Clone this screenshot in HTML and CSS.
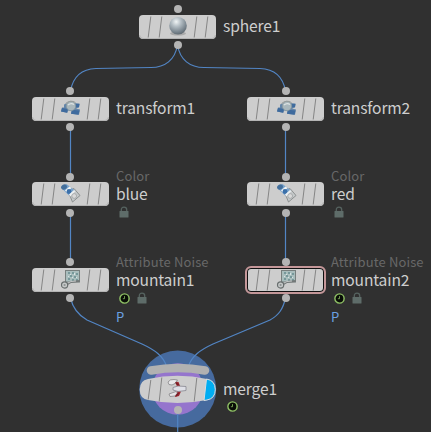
FILE: index.html
```html
<!DOCTYPE html>
<html lang="en">
<head>
<meta charset="utf-8">
<title>Node network</title>
<link rel="stylesheet" href="styles.css">
</head>
<body>
<svg class="defs" width="0" height="0" aria-hidden="true">
  <defs>
    <radialGradient id="ball" cx=".4" cy=".27" r=".75">
      <stop offset="0" stop-color="#f0f4f5"/><stop offset=".35" stop-color="#b5bfc5"/>
      <stop offset=".75" stop-color="#7d8992"/><stop offset="1" stop-color="#5d6870"/>
    </radialGradient>
    <symbol id="plate" viewBox="0 0 77 24">
      <rect width="77" height="24" rx="4" fill="#cdcdcd"/>
      <path d="M.5 20Q1 23.5 4 23.5H73Q76 23.5 76.5 20" fill="none" stroke="#b4b4b4"/>
      <path d="M11.8 1.5L9.2 22.5M22.8 1.5L20.2 22.5M57.8 1.5L55.2 22.5M68.8 1.5L66.2 22.5" stroke="#858585" stroke-width="1" fill="none"/>
    </symbol>
    <symbol id="sphere" viewBox="0 0 22 22">
      <ellipse cx="11" cy="18.5" rx="8" ry="2" fill="#aaa"/>
      <circle cx="11" cy="10.8" r="8.8" fill="url(#ball)"/>
    </symbol>
    <symbol id="transform" viewBox="0 0 22 22">
      <path d="M4 7.500L8 6L14 6L19.500 6.500L19 10.500L16 11.500L20 12.500L19 17.800L11 16.800L11.500 14L8 13.500L7.500 15.800L1 14.500L2 10.500L4 10.500Z" fill="#6485a8"/>
      <path d="M2 11L8 12L7 15.800L1 14.500ZM12 12.800L19.500 13.500L18.500 17.800L11 16.800ZM15 7L19.500 7L19 10L15 10.500Z" fill="#3f6b9e"/>
      <circle cx="11" cy="9" r="4.700" fill="#a9b7bc" stroke="#88969b" stroke-width=".7"/>
      <path d="M8 8Q11 5.500 14 7.500" fill="none" stroke="#dde3e3" stroke-width="1.400"/>
      <path d="M5.500 6.500Q10.500 2.500 15.500 5.500" fill="none" stroke="#979c9b" stroke-width="1"/>
    </symbol>
    <symbol id="paint" viewBox="0 0 22 22">
      <path d="M8 9L14 6.500L20 13.500L12.500 20Z" fill="#c5c9ca" stroke="#858989" stroke-width=".9"/>
      <path d="M1 5.500L6.500 2L15 8.500L9 13.500Z" fill="#78a2cb"/>
      <ellipse cx="4" cy="5" rx="3" ry="2.500" transform="rotate(-35 4 5)" fill="#436f9c"/>
      <path d="M5 8.500L9.500 4.500L11.500 6L7 10.500Z" fill="#f2f4f4"/>
      <circle cx="9" cy="9.500" r="2.400" fill="#3b70aa"/>
      <path d="M9 12.500L14 8L15.500 9L10.500 14.500Z" fill="#edf0f1"/>
      <circle cx="14.200" cy="14" r="2.400" fill="#d9d9d9" stroke="#a0a3a4" stroke-width=".8"/>
    </symbol>
    <symbol id="noise" viewBox="0 0 22 22">
      <rect x="5.500" y="2.500" width="14" height="11.500" fill="#a9bdbd" stroke="#777f7e" stroke-width="1"/>
      <path d="M8 4h2v2h-2zM12 4h2v2h-2zM16 5h2v2h-2zM10 7h2v2h-2zM14 8h2v2h-2zM8 10h2v2h-2zM12 11h2v2h-2zM16 11h2v2h-2z" fill="#76989a"/>
      <path d="M10 6h1v1h-1zM14 5h1v2h-1zM8 8h1v1h-1zM12 9h1v1h-1zM16 9h1v1h-1z" fill="#d5e4e4"/>
      <path d="M6 17L11 14L19.500 13" fill="none" stroke="#747878" stroke-width="2"/>
      <path d="M6 16L11 13.500L16 13" fill="none" stroke="#d9dcdc" stroke-width=".8"/>
      <circle cx="4.600" cy="17" r="3.100" fill="#c5c8c8" stroke="#686e6e" stroke-width="1.200"/>
      <circle cx="4.600" cy="17" r="1.100" fill="#8d9292"/>
    </symbol>
    <symbol id="merge" viewBox="0 0 22 22">
      <path d="M8 4.500L11.500 5L13.500 10L10 9.500ZM8 17L10 14L14 14.500L12 19L8 20Z" fill="#9e2930"/>
      <path d="M1 5Q3 2 7 2.500L10.500 3L8 6.500L5 8L2 7.500Z" fill="#e8e8ea" stroke="#858487" stroke-width=".8"/>
      <path d="M6 10.500L11 9L19 9.500V13.500L11 14.500L6 13Z" fill="#dedfe6" stroke="#868791" stroke-width=".8"/>
      <path d="M2 17L9 14.500L10.500 16L8 19L3 19.500Z" fill="#e5e5e7" stroke="#858487" stroke-width=".8"/>
      <path d="M8.500 5.500L11.500 8M9 19L11.500 16" stroke="#741b24" stroke-width="1.200"/>
    </symbol>
    <symbol id="lock" viewBox="0 0 10 12">
      <path d="M2.300 5.500V3.800Q2.300 1.200 5 1.200T7.700 3.800V5.500" fill="none" stroke="#566360" stroke-width="1.300"/>
      <rect x=".5" y="5" width="9" height="6.500" rx=".5" fill="#5e6c69"/>
    </symbol>
    <symbol id="clock" viewBox="0 0 10 10">
      <circle cx="5" cy="5" r="4.200" fill="#080d06" stroke="#8fc165" stroke-width="1.300"/>
      <path d="M5 2.800V5.200H3.500" fill="none" stroke="#8fc165" stroke-width=".7"/>
    </symbol>
  </defs>
</svg>

<main class="network">
  <svg class="wires" viewBox="0 0 431 432" aria-hidden="true">
    <circle cx="177.700" cy="389" r="38.500" fill="#466a9e"/>
    <circle cx="177.700" cy="389" r="25.700" fill="#9575cd"/>
    <g fill="none" stroke="#5285c4" stroke-width="1.200">
      <path d="M177.500 45C175 60 165 67.500 151 67.500L96 68.500C81 69 73 77 70.500 91"/>
      <path d="M177.500 45C180 60 190 67.500 204 67.500L260 68.500C275 69 283 77 285.500 91"/>
      <path d="M70.500 127V176M285.500 127V176M70.500 213V262M285.500 213V262"/>
      <path d="M70.500 298C73 309 78 315 87 320L142 344C155 350 163 356 166.500 366"/>
      <path d="M285.500 298C283 309 279 315 270 320L213 344C200 350 192 356 188.500 366"/>
      <path d="M177.700 410V432"/>
    </g>
  </svg>

  <section class="node single sphere-node">
    <i class="port in"></i><i class="port out"></i>
    <svg class="plate"><use href="#plate"/></svg><svg class="icon"><use href="#sphere"/></svg>
    <div class="label"><span class="name">sphere1</span></div>
  </section>
  <section class="node single left transform-left">
    <i class="port in"></i><i class="port out"></i>
    <svg class="plate"><use href="#plate"/></svg><svg class="icon"><use href="#transform"/></svg>
    <div class="label"><span class="name">transform1</span></div>
  </section>
  <section class="node single right transform-right">
    <i class="port in"></i><i class="port out"></i>
    <svg class="plate"><use href="#plate"/></svg><svg class="icon"><use href="#transform"/></svg>
    <div class="label"><span class="name">transform2</span></div>
  </section>
  <section class="node left color color-left">
    <i class="port in"></i><i class="port out"></i>
    <svg class="plate"><use href="#plate"/></svg><svg class="icon"><use href="#paint"/></svg>
    <div class="label"><span class="kind">Color</span><span class="name">blue</span>
      <div class="badges"><svg class="lock"><use href="#lock"/></svg></div></div>
  </section>
  <section class="node right color color-right">
    <i class="port in"></i><i class="port out"></i>
    <svg class="plate"><use href="#plate"/></svg><svg class="icon"><use href="#paint"/></svg>
    <div class="label"><span class="kind">Color</span><span class="name">red</span>
      <div class="badges"><svg class="lock"><use href="#lock"/></svg></div></div>
  </section>
  <section class="node left noise-left">
    <i class="port in"></i><i class="port out"></i>
    <svg class="plate"><use href="#plate"/></svg><svg class="icon"><use href="#noise"/></svg>
    <div class="label"><span class="kind">Attribute Noise</span><span class="name">mountain1</span>
      <div class="badges"><svg class="clock"><use href="#clock"/></svg><svg class="lock"><use href="#lock"/></svg></div>
      <span class="attribute">P</span></div>
  </section>
  <section class="node right noise-right selected">
    <i class="port in"></i><i class="port out"></i>
    <svg class="plate"><use href="#plate"/></svg><svg class="icon"><use href="#noise"/></svg>
    <div class="label"><span class="kind">Attribute Noise</span><span class="name">mountain2</span>
      <div class="badges"><svg class="clock"><use href="#clock"/></svg><svg class="lock"><use href="#lock"/></svg></div>
      <span class="attribute">P</span></div>
    <div class="outline"></div>
  </section>
  <section class="node merge-node">
    <svg class="merge-plate" viewBox="0 0 77 42">
      <path d="M12 7.500Q39 2.500 66 7.500" fill="none" stroke="#b1b1b1" stroke-width="8.500" stroke-linecap="round"/>
      <path d="M9 16Q38.500 9.500 68 16Q76.300 17.500 76.300 26.500T68 37Q38.500 43 9 37Q.7 35.500 .7 26.500T9 16Z" fill="#cdcdcd"/>
      <path d="M67.500 16Q76.300 17.500 76.300 26.500T68 37L65 37.500Z" fill="#00adf2" stroke="#d8dddf" stroke-width="1"/>
      <path d="M11.800 17L9.200 36.500M22.800 14.500L20.200 38.500M57.800 15L55.200 38.500" fill="none" stroke="#858585"/>
    </svg>
    <svg class="icon"><use href="#merge"/></svg><i class="port out"></i>
    <div class="label"><span class="name">merge1</span>
      <div class="badges"><svg class="clock"><use href="#clock"/></svg></div></div>
  </section>
</main>
</body>
</html>
```

FILE: styles.css
```css
body { margin: 0; background: #303030; }
.defs { position: absolute; }
.network {
  position: relative;
  width: 431px;
  height: 432px;
  overflow: hidden;
  background: #303030;
  font-family: "Noto Sans CJK SC", "Noto Sans", sans-serif;
}
.wires { display: block; width: 431px; height: 432px; }
.node { position: absolute; width: 77px; height: 24px; }
.sphere-node { left: 139px; top: 15px; }
.transform-left { left: 32px; top: 97px; }
.transform-right { left: 247px; top: 97px; }
.color-left { left: 32px; top: 182px; }
.color-right { left: 247px; top: 182px; }
.noise-left { left: 32px; top: 268px; }
.noise-right { left: 247px; top: 268px; }
.merge-node { left: 139px; top: 377px; }
.plate { display: block; width: 77px; height: 24px; }
.outline {
  position: absolute;
  inset: -2px;
  border: 2px solid #c49799;
  border-radius: 6px;
  box-shadow: inset 0 0 0 1px #111;
}
.icon { position: absolute; left: 28px; top: 0; width: 22px; height: 22px; }
.right .icon { left: 29px; }
.port {
  position: absolute;
  left: 35px;
  width: 8px;
  height: 8px;
  border-radius: 50%;
  background: #b4b4b4;
}
.left .port { left: 34px; }
.in { top: -10px; }
.out { top: 26px; }
.color .in { top: -9px; }
.color .out { top: 27px; }
.merge-plate { position: absolute; left: 0; top: -14px; width: 77px; height: 42px; }
.merge-node .out { top: 29px; }
.label {
  position: absolute;
  left: 84px;
  top: 2px;
  white-space: nowrap;
}
.single .label { top: 1px; }
.name {
  display: block;
  height: 22px;
  font-size: 15.600px;
  line-height: 18px;
  letter-spacing: -.15px;
  color: #cecece;
}
.kind {
  position: absolute;
  left: 0;
  top: -16px;
  font-size: 13px;
  line-height: 16px;
  letter-spacing: .13px;
  color: #686868;
}
.badges { display: flex; gap: 7px; align-items: center; height: 12px; padding-left: 3px; }
.merge-node .name { height: 21px; }
.merge-node .badges { padding-left: 4px; }
.lock { width: 10px; height: 12px; }
.clock { width: 11px; height: 11px; }
.attribute { display: block; margin-top: 4px; font-size: 13px; line-height: 18px; color: #6ba0e2; }
```
